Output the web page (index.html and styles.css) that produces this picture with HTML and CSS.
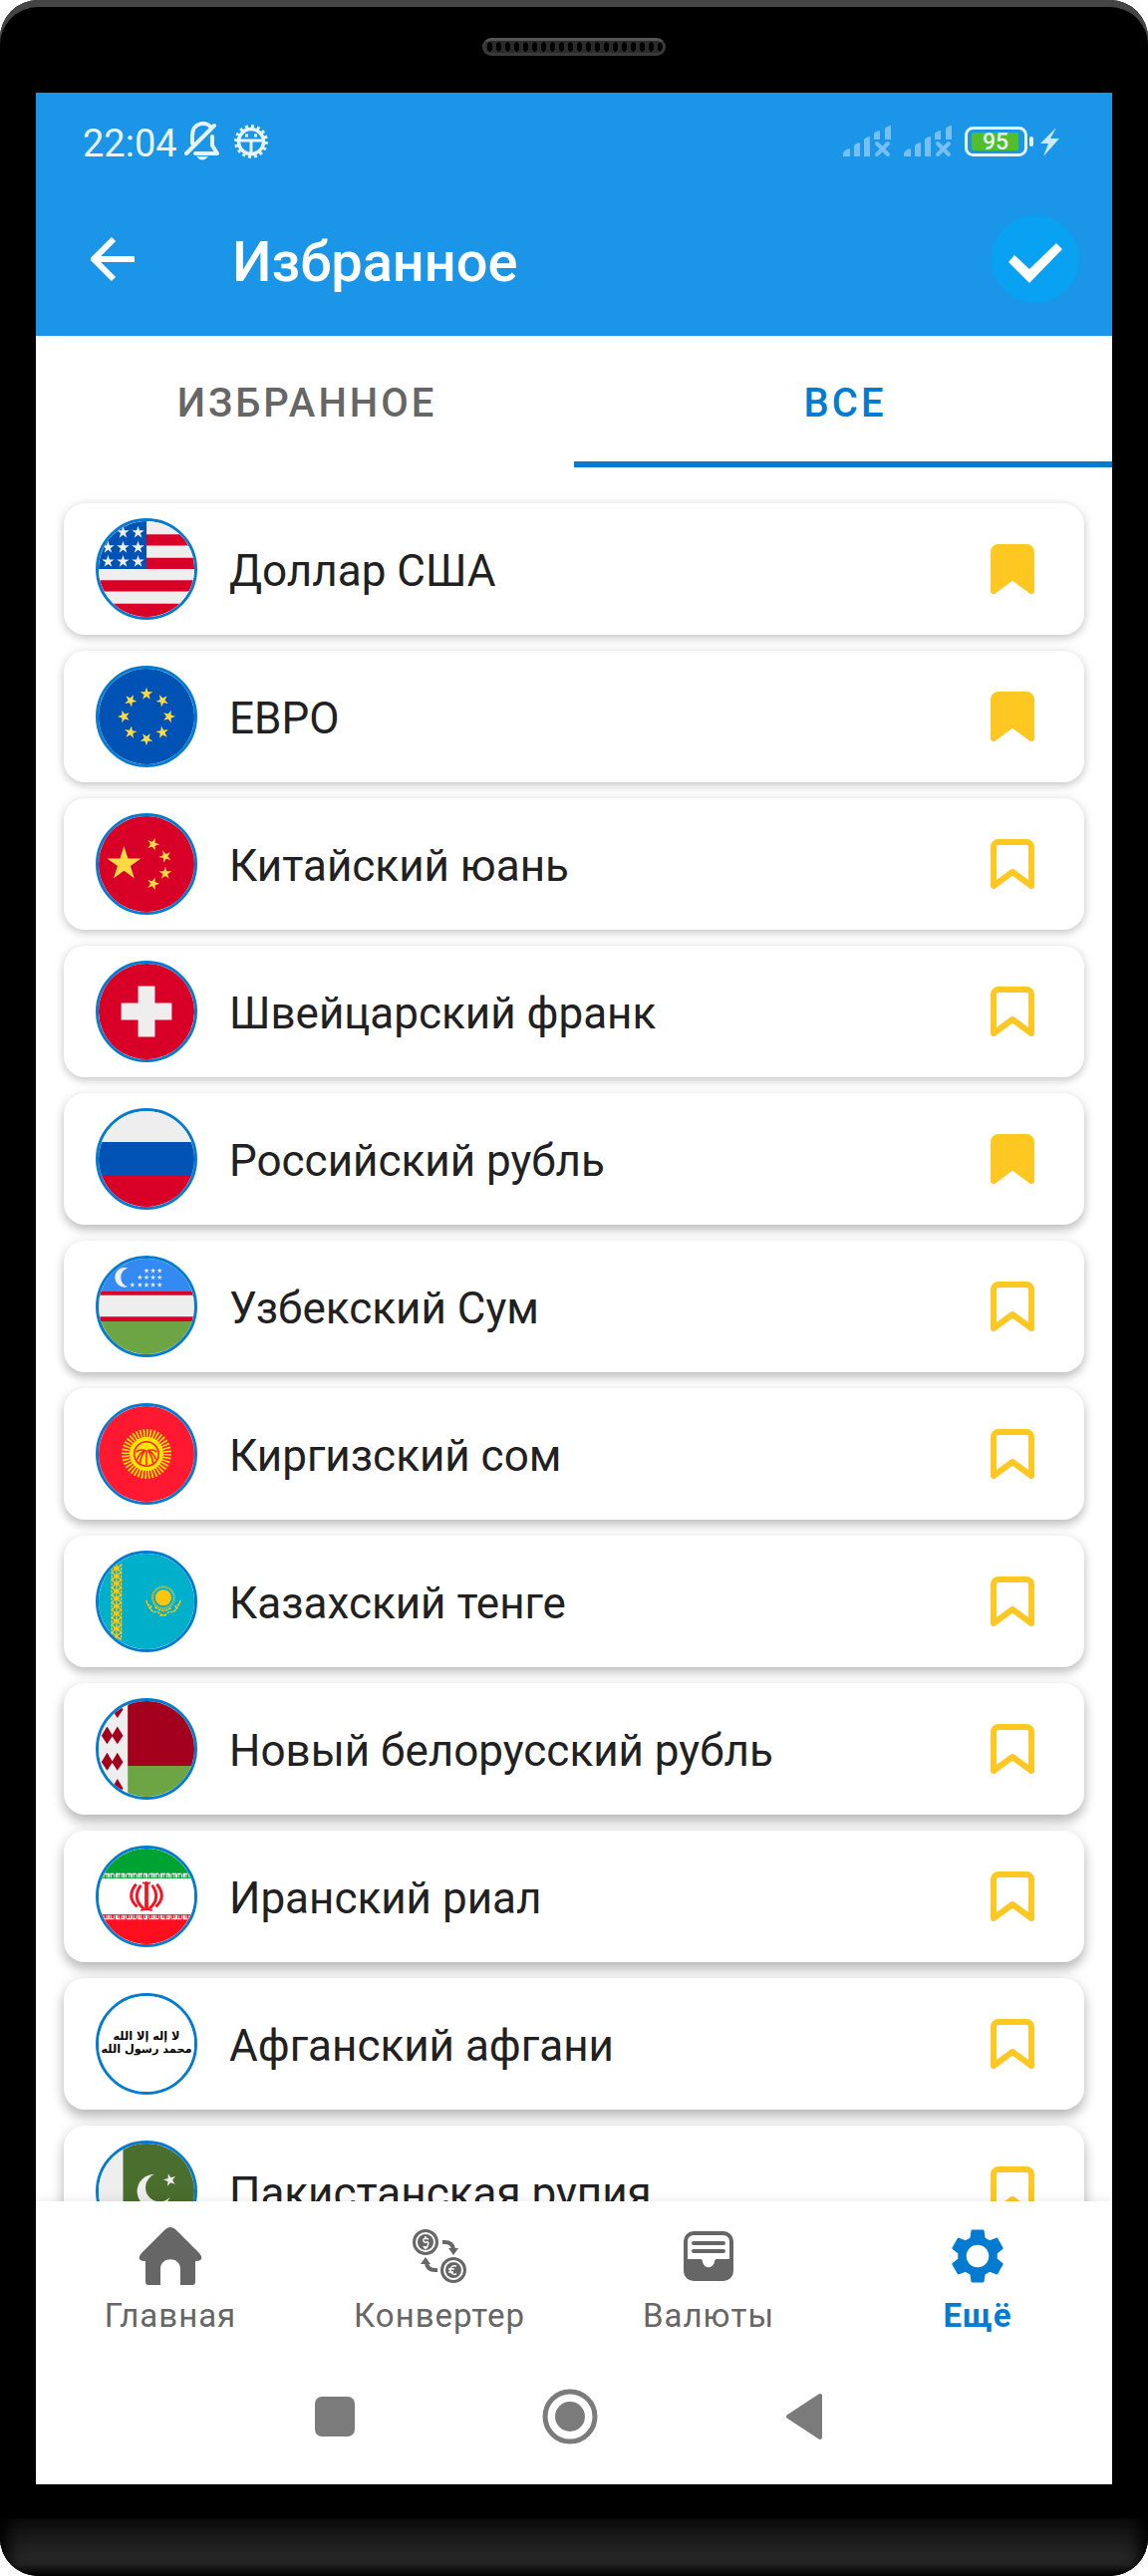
FILE: index.html
```html
<!DOCTYPE html>
<html lang="ru">
<head>
<meta charset="utf-8">
<meta name="viewport" content="width=device-width, initial-scale=1">
<title>Избранное</title>
<link rel="stylesheet" href="styles.css">
</head>
<body>
<svg class="defs" aria-hidden="true">
  <symbol id="star" viewBox="-10 -10 20 20" overflow="visible"><path d="M0-10 2.25-3.1H9.5L3.63 1.18 5.88 8.1 0 3.82-5.88 8.1-3.63 1.18-9.5-3.1H-2.25z"/></symbol>
  <symbol id="mark" viewBox="0 0 66 66"><path d="M19 11h28a5 5 0 0 1 5 5v39L33 41 14 55V16a5 5 0 0 1 5-5z" stroke="#ffc721" stroke-width="6" stroke-linejoin="round"/></symbol>
  <symbol id="signal" viewBox="0 0 48 32"><path d="M0 31v-3q1-4 7-5v8zM11 31V20q1-2 6-3v14zM21 31V14q1-2 6-3v20zM31 14V8q1-2 6-3v9zM42 14V3q1-2 6-3v14z"/><path d="m34 18 11 11m0-11L34 29" stroke="currentColor" stroke-width="4" stroke-linecap="round"/></symbol>
</svg>
<div class="phone">
  <div class="bezel"><span class="speaker"></span></div>
  <div class="screen">
    <header class="top">
      <div class="status">
        <span class="time">22:04</span>
        <svg class="bell" width="36" height="40" viewBox="0 0 36 40" fill="none" stroke="#e8f4fd" stroke-width="4" stroke-linecap="round" stroke-linejoin="round"><path d="M2 32 30 4M8 22V14C8 0 23 0 26 5M11 32H33L28 24V15"/><path d="M12 35h12q-6 7-12 0z" fill="#e8f4fd" stroke="none"/></svg>
        <svg class="bug" width="34" height="34" viewBox="0 0 34 34" fill="none" stroke="#e8f4fd"><circle cx="17" cy="17" r="12.5" stroke-width="3.5"/><circle cx="17" cy="17" r="15.2" stroke-width="3.4" pathLength="32" stroke-dasharray="1 1"/><path d="M4 16h26M17 17v13" stroke-width="3"/><path d="M11 11h3M20 11h3" stroke-width="3"/></svg>
        <div class="indicators">
          <svg class="signal" width="48" height="32"><use href="#signal"/></svg>
          <svg class="signal" width="48" height="32"><use href="#signal"/></svg>
          <svg class="battery" width="96" height="30" viewBox="0 0 96 30"><rect x="1.5" y="1.5" width="60" height="27" rx="7" fill="none" stroke="#e8f4fd" stroke-width="3"/><rect x="7" y="6" width="47" height="18" rx="2" fill="#50bf2a"/><text x="31" y="23" text-anchor="middle" class="charge">95</text><rect x="65" y="10" width="4" height="10" rx="2" fill="#e8f4fd"/><path d="M92 1 76 17h8l-5 13 16-18h-9z" fill="#cfe8fb"/></svg>
        </div>
      </div>
      <div class="appbar">
        <button class="icon-button back" aria-label="Назад"><svg width="44" height="44" viewBox="0 0 44 44" fill="none" stroke="#fff" stroke-width="6"><path d="M44 22H4M23 2 3 22l20 20"/></svg></button>
        <h1>Избранное</h1>
        <button class="icon-button done" aria-label="Готово"><svg width="88" height="88" viewBox="0 0 88 88" fill="#fff"><path d="m17 47 6-7 15 14 27-26 6 6-33 34z"/></svg></button>
      </div>
    </header>
    <div class="tabs" role="tablist">
      <button class="tab" role="tab" aria-selected="false">ИЗБРАННОЕ</button>
      <button class="tab active" role="tab" aria-selected="true">ВСЕ</button>
    </div>
    <ul class="list">
      <li class="card">
        <svg class="flag" viewBox="0 0 102 102"><path fill="#eee" d="M0 0h102v102H0z"/><path fill="#d80027" d="M51 14h51v12H51zM51 39h51v12H51zM0 63h102v12H0zM0 88h102v14H0z"/><path fill="#0052b4" d="M0 0h51v51H0z"/><g fill="#eee"><use href="#star" x="19" y="5" width="14" height="14"/><use href="#star" x="35" y="5" width="14" height="14"/><use href="#star" x="3" y="21" width="14" height="14"/><use href="#star" x="19" y="21" width="14" height="14"/><use href="#star" x="35" y="21" width="14" height="14"/><use href="#star" x="3" y="36" width="14" height="14"/><use href="#star" x="19" y="36" width="14" height="14"/><use href="#star" x="35" y="36" width="14" height="14"/></g></svg>
        <span class="name">Доллар США</span>
        <button class="icon-button mark saved" aria-pressed="true" aria-label="Доллар США в избранном"><svg width="66" height="66"><use href="#mark"/></svg></button>
      </li>
      <li class="card">
        <svg class="flag" viewBox="0 0 102 102"><path fill="#0052b4" d="M0 0h102v102H0z"/><g fill="#ffda44"><use href="#star" x="44" y="20" width="14" height="14"/><use href="#star" x="44" y="20" width="14" height="14" transform="rotate(45 51 51)"/><use href="#star" x="44" y="20" width="14" height="14" transform="rotate(90 51 51)"/><use href="#star" x="44" y="20" width="14" height="14" transform="rotate(135 51 51)"/><use href="#star" x="44" y="20" width="14" height="14" transform="rotate(180 51 51)"/><use href="#star" x="44" y="20" width="14" height="14" transform="rotate(225 51 51)"/><use href="#star" x="44" y="20" width="14" height="14" transform="rotate(270 51 51)"/><use href="#star" x="44" y="20" width="14" height="14" transform="rotate(315 51 51)"/></g></svg>
        <span class="name">ЕВРО</span>
        <button class="icon-button mark saved" aria-pressed="true" aria-label="ЕВРО в избранном"><svg width="66" height="66"><use href="#mark"/></svg></button>
      </li>
      <li class="card">
        <svg class="flag" viewBox="0 0 102 102"><path fill="#d80027" d="M0 0h102v102H0z"/><g fill="#ffda44"><use href="#star" x="8" y="32" width="38" height="38"/><use href="#star" x="51" y="23" width="14" height="14" transform="rotate(18 58 30)"/><use href="#star" x="64" y="36" width="14" height="14" transform="rotate(-22 71 43)"/><use href="#star" x="64" y="54" width="14" height="14"/><use href="#star" x="51" y="65" width="14" height="14" transform="rotate(18 58 72)"/></g></svg>
        <span class="name">Китайский юань</span>
        <button class="icon-button mark" aria-pressed="false" aria-label="Добавить: Китайский юань"><svg width="66" height="66"><use href="#mark"/></svg></button>
      </li>
      <li class="card">
        <svg class="flag" viewBox="0 0 102 102"><path fill="#d80027" d="M0 0h102v102H0z"/><path fill="#eee" d="M42 24h18v18h18v18H60v18H42V60H24V42h18z"/></svg>
        <span class="name">Швейцарский франк</span>
        <button class="icon-button mark" aria-pressed="false" aria-label="Добавить: Швейцарский франк"><svg width="66" height="66"><use href="#mark"/></svg></button>
      </li>
      <li class="card">
        <svg class="flag" viewBox="0 0 102 102"><path fill="#eee" d="M0 0h102v33H0z"/><path fill="#0052b4" d="M0 33h102v36H0z"/><path fill="#d80027" d="M0 69h102v33H0z"/></svg>
        <span class="name">Российский рубль</span>
        <button class="icon-button mark saved" aria-pressed="true" aria-label="Российский рубль в избранном"><svg width="66" height="66"><use href="#mark"/></svg></button>
      </li>
      <li class="card">
        <svg class="flag" viewBox="0 0 102 102"><path fill="#338af3" d="M0 0h102v35H0z"/><path fill="#d80027" d="M0 35h102v32H0z"/><path fill="#eee" d="M0 39h102v23H0z"/><path fill="#6da544" d="M0 67h102v35H0z"/><g fill="#eee"><path d="M31 10A10.500 10.500 0 1 0 31 30A10.500 10.500 0 0 1 31 10z"/><use href="#star" x="48" y="10" width="6" height="6"/><use href="#star" x="55" y="10" width="6" height="6"/><use href="#star" x="62" y="10" width="6" height="6"/><use href="#star" x="41" y="17" width="6" height="6"/><use href="#star" x="48" y="17" width="6" height="6"/><use href="#star" x="55" y="17" width="6" height="6"/><use href="#star" x="62" y="17" width="6" height="6"/><use href="#star" x="33" y="25" width="6" height="6"/><use href="#star" x="41" y="25" width="6" height="6"/><use href="#star" x="48" y="25" width="6" height="6"/><use href="#star" x="55" y="25" width="6" height="6"/><use href="#star" x="62" y="25" width="6" height="6"/></g></svg>
        <span class="name">Узбекский Сум</span>
        <button class="icon-button mark" aria-pressed="false" aria-label="Добавить: Узбекский Сум"><svg width="66" height="66"><use href="#mark"/></svg></button>
      </li>
      <li class="card">
        <svg class="flag" viewBox="0 0 102 102"><path fill="#ff1930" d="M0 0h102v102H0z"/><circle cx="51" cy="51" r="18" fill="#ffe600"/><circle cx="51" cy="51" r="22" fill="none" stroke="#ffe600" stroke-width="9" pathLength="80" stroke-dasharray="1 1"/><g fill="none" stroke="#ff1930" stroke-width="1.600"><circle cx="51" cy="51" r="13"/><path d="M51 48v15M49 48q-4 5-5 13M53 48q4 5 5 13M50 47q-7 3-9 10M52 47q7 3 9 10M51 48q-7-3-11 1M51 48q7-3 11 1"/></g></svg>
        <span class="name">Киргизский сом</span>
        <button class="icon-button mark" aria-pressed="false" aria-label="Добавить: Киргизский сом"><svg width="66" height="66"><use href="#mark"/></svg></button>
      </li>
      <li class="card">
        <svg class="flag" viewBox="0 0 102 102"><path fill="#00afca" d="M0 0h102v102H0z"/><g fill="none" stroke="#fec50c" stroke-width="1.500"><path d="M14 11v80M24 11v80" stroke-dasharray="3 1"/><path d="M14 12l10 8-10 8 10 8-10 8 10 8-10 8 10 8-10 8 10 8-10 8M24 12l-10 8 10 8-10 8 10 8-10 8 10 8-10 8 10 8-10 8 10 8M19 11v80"/><path d="M16 16h6M16 32h6M16 48h6M16 64h6M16 80h6M16 24h6M16 40h6M16 56h6M16 72h6" stroke-width="2.500"/><circle cx="69" cy="47" r="11.500" stroke-width="2.500" pathLength="64" stroke-dasharray="1 1"/><path d="M51 50q0 5 5 6-2 5 4 6M87 50q0 5-5 6 2 5-4 6M52 53q4 11 10 9M86 53q-4 11-10 9M60 57q9 8 18 0M63 62q6 7 12 0M65 66h8" stroke-dasharray="3 1"/></g><circle cx="69" cy="47" r="8.500" fill="#fec50c"/></svg>
        <span class="name">Казахский тенге</span>
        <button class="icon-button mark" aria-pressed="false" aria-label="Добавить: Казахский тенге"><svg width="66" height="66"><use href="#mark"/></svg></button>
      </li>
      <li class="card">
        <svg class="flag" viewBox="0 0 102 102"><path fill="#eee" d="M0 0h31v102H0z"/><path fill="#a2001d" d="M31 0h71v69H31z"/><path fill="#6da544" d="M31 69h71v33H31z"/><path fill="#a2001d" d="m9 27 6 10-6 9-6-9zM20 27l6 10-6 9-6-9zM9 55l6 10-6 9-6-9zM20 55l6 10-6 9-6-9zM20-1l6 10-6 9-6-9zM20 83l6 10-6 9-6-9z"/></svg>
        <span class="name">Новый белорусский рубль</span>
        <button class="icon-button mark" aria-pressed="false" aria-label="Добавить: Новый белорусский рубль"><svg width="66" height="66"><use href="#mark"/></svg></button>
      </li>
      <li class="card">
        <svg class="flag" viewBox="0 0 102 102"><path fill="#fff" d="M0 0h102v102H0z"/><path fill="#00a331" d="M0 0h102v32H0z"/><path fill="#ff0f1e" d="M0 70h102v32H0z"/><g fill="none" stroke="#fff"><path d="M0 27h102M0 75h102" stroke-width="1.500" stroke-dasharray="4 2 5 1"/><path d="M0 29h102M0 73h102" stroke-width="4" stroke-dasharray="1 1 2 1 1 2"/></g><g fill="none" stroke="#ff0f1e" stroke-width="3"><path d="M51 37v29" stroke-width="4"/><path d="M47 36q2 2 4 0 2 2 4 0M45 66q6-3 12 0" stroke-width="2"/><path d="M45 39q-10 14 3 25M57 39q10 14-3 25"/><path d="M40 38q-11 13 1 24M62 38q11 13-1 24"/></g></svg>
        <span class="name">Иранский риал</span>
        <button class="icon-button mark" aria-pressed="false" aria-label="Добавить: Иранский риал"><svg width="66" height="66"><use href="#mark"/></svg></button>
      </li>
      <li class="card">
        <svg class="flag" viewBox="0 0 102 102"><path fill="#fff" d="M0 0h102v102H0z"/><text class="script" x="51" y="47" text-anchor="middle">لا إله إلا الله</text><text class="script" x="51" y="61" text-anchor="middle">محمد رسول الله</text></svg>
        <span class="name">Афганский афгани</span>
        <button class="icon-button mark" aria-pressed="false" aria-label="Добавить: Афганский афгани"><svg width="66" height="66"><use href="#mark"/></svg></button>
      </li>
      <li class="card">
        <svg class="flag" viewBox="0 0 102 102"><path fill="#eee" d="M0 0h26v102H0z"/><path fill="#496e2d" d="M26 0h76v102H26z"/><circle cx="59" cy="51" r="18" fill="#eee"/><circle cx="65" cy="47" r="15" fill="#496e2d"/><use href="#star" x="69" y="32" width="14" height="14" fill="#eee" transform="rotate(-15 76 39)"/></svg>
        <span class="name">Пакистанская рупия</span>
        <button class="icon-button mark" aria-pressed="false" aria-label="Добавить: Пакистанская рупия"><svg width="66" height="66"><use href="#mark"/></svg></button>
      </li>
    </ul>
    <nav class="bottom-nav">
      <a href="#home"><svg width="66" height="66" viewBox="0 0 66 66" fill="currentColor"><path d="M28 6q5-4 10 0l24 24q4 5 1 7-1 1-5 1v21q0 3-3 3H43V46c0-13-20-13-20 0v16H11q-3 0-3-3V38q-4 0-5-1-3-2 1-7z"/></svg>Главная</a>
      <a href="#converter"><svg width="66" height="66" viewBox="0 0 66 66" fill="none" stroke="currentColor"><circle cx="19" cy="19" r="11.500" stroke-width="3"/><circle cx="19" cy="19" r="8" fill="currentColor" stroke="none"/><circle cx="47" cy="47" r="11.500" stroke-width="3"/><circle cx="47" cy="47" r="8" fill="currentColor" stroke="none"/><path d="M36 19q10-1 11 7M31 47q-10 1-11-7" stroke-width="4"/><path d="M42 25h10l-5 7zM14 41h10l-5-7z" fill="currentColor" stroke="none"/><path d="M22 16q-5-2-5 1t3 2 1 4-4 0M19 13v2M19 23v2M50 43q-6-1-6 4t6 4M42 46h6M42 49h5" stroke="#fff" stroke-width="1.500"/></svg>Конвертер</a>
      <a href="#currencies"><svg width="66" height="66" viewBox="0 0 66 66"><rect x="10" y="10" width="46" height="46" rx="8" fill="none" stroke="currentColor" stroke-width="4"/><path d="M10 36h15q2 0 2 3c2 7 10 7 12 0q0-3 2-3h15v14q0 6-6 6H16q-6 0-6-6z" fill="currentColor"/><path d="M18 20h30M18 28h30" stroke="currentColor" stroke-width="4" stroke-linecap="round"/></svg>Валюты</a>
      <a href="#more" class="current" aria-current="page"><svg width="66" height="66" viewBox="0 0 24 24" fill="currentColor"><path d="M19.140 12.940c.04-.3.06-.61.06-.94 0-.32-.02-.64-.07-.94l2.030-1.580c.18-.14.23-.41.12-.61l-1.920-3.320c-.12-.22-.37-.29-.59-.22l-2.390.96c-.5-.38-1.030-.7-1.620-.94l-.36-2.540c-.04-.24-.24-.41-.48-.41h-3.840c-.24 0-.43.17-.47.41l-.36 2.540c-.59.24-1.130.57-1.620.94l-2.390-.96c-.22-.08-.47 0-.59.22L2.740 8.870c-.12.21-.08.47.12.61l2.030 1.580c-.05.3-.09.63-.09.94s.02.64.07.94l-2.030 1.580c-.18.14-.23.41-.12.61l1.920 3.320c.12.22.37.29.59.22l2.390-.96c.5.38 1.030.7 1.620.94l.36 2.540c.05.24.24.41.48.41h3.840c.24 0 .44-.17.47-.41l.36-2.540c.59-.24 1.130-.56 1.620-.94l2.390.96c.22.08.47 0 .59-.22l1.920-3.320c.12-.22.07-.47-.12-.61zM12 16.100a4.100 4.100 0 1 1 0-8.200 4.100 4.100 0 0 1 0 8.200z"/></svg>Ещё</a>
    </nav>
    <div class="system-nav">
      <button class="icon-button" aria-label="Недавние"><svg width="56" height="56" viewBox="0 0 56 56"><rect x="8" y="8" width="40" height="40" rx="7" fill="#7b7b7b"/></svg></button>
      <button class="icon-button" aria-label="Домой"><svg width="56" height="56" viewBox="0 0 56 56"><circle cx="28" cy="28" r="25" fill="none" stroke="#7b7b7b" stroke-width="5"/><circle cx="28" cy="28" r="15" fill="#7b7b7b"/></svg></button>
      <button class="icon-button" aria-label="Назад"><svg width="56" height="56" viewBox="0 0 56 56"><path d="M11 28 43 7v42z" fill="#7b7b7b" stroke="#7b7b7b" stroke-width="4" stroke-linejoin="round"/></svg></button>
    </div>
  </div>
  <div class="chin"></div>
</div>
</body>
</html>
```
FILE: styles.css
```css
* {
  box-sizing: border-box;
}

body {
  margin: 0;
  background: #fff;
  color: #212121;
  font-family: Roboto, "Liberation Sans", sans-serif;
}

.defs {
  display: none;
}

.phone {
  display: flex;
  flex-direction: column;
  height: 100vh;
  overflow: hidden;
  border-radius: 38px;
  background: #000;
  box-shadow: inset 0 7px 0 #454545;
}

.bezel {
  display: flex;
  flex: none;
  justify-content: center;
  height: 93px;
  padding-top: 38px;
}

.speaker {
  width: 184px;
  height: 18px;
  border: 3px solid #3a3a3a;
  border-top-color: #555;
  border-radius: 9px;
  background: radial-gradient(ellipse 3px 5px, #000 90%, #2b2b2b) 0 0 / 9px 12px;
}

.screen {
  display: flex;
  flex: 1;
  flex-direction: column;
  min-height: 0;
  margin: 0 36px;
  background: #fff;
}

.top {
  flex: none;
  background: #1a95e8;
}

.status {
  display: flex;
  align-items: center;
  height: 90px;
  padding: 8px 52px 0 47px;
}

.time {
  padding-top: 4px;
  color: #e8f4fd;
  font-size: 38px;
  line-height: 44px;
}

.bell {
  margin-left: 7px;
}

.bug {
  margin-left: 14px;
}

.indicators {
  display: flex;
  gap: 13px;
  align-items: center;
  margin-left: auto;
}

.signal {
  color: #75bff1;
  fill: currentColor;
}

.charge {
  fill: #e8f4fd;
  font-size: 23px;
  font-weight: 500;
}

.icon-button {
  display: grid;
  flex: none;
  place-items: center;
  padding: 0;
  border: 0;
  background: none;
  cursor: pointer;
}

.appbar {
  display: flex;
  align-items: center;
  height: 154px;
  padding: 0 33px 0 55px;
}

.appbar h1 {
  flex: 1;
  margin: 0 0 0 98px;
  padding-top: 5px;
  color: #fff;
  font-size: 56px;
  font-weight: 500;
  line-height: 64px;
}

.done {
  border-radius: 50%;
  background: #09a1f2;
}

.tabs {
  display: grid;
  flex: none;
  grid-template-columns: 1fr 1fr;
}

.tab {
  height: 132px;
  padding: 9px 0 0 4px;
  border: 0;
  border-bottom: 6px solid transparent;
  background: none;
  color: #666;
  font-family: inherit;
  font-size: 40px;
  font-weight: 500;
  letter-spacing: 3px;
}

.tab.active {
  border-bottom-color: #037bd0;
  color: #037bd0;
}

.list {
  display: flex;
  flex: 1;
  flex-direction: column;
  gap: 16px;
  min-height: 0;
  margin: 0;
  padding: 36px 28px 16px;
  overflow: hidden;
  list-style: none;
}

.card {
  display: flex;
  flex: none;
  gap: 32px;
  align-items: center;
  height: 132px;
  padding: 0 39px 0 32px;
  border-radius: 21px;
  background: #fff;
  box-shadow: 0 3px 8px rgb(0 0 0 / 20%), 0 0 16px rgb(0 0 0 / 5%);
}

.card:nth-child(n+5) {
  box-shadow: 0 5px 10px rgb(0 0 0 / 23%), 0 0 16px rgb(0 0 0 / 6%);
}

.card:nth-child(n+9) {
  box-shadow: 0 7px 12px rgb(0 0 0 / 25%), 0 0 16px rgb(0 0 0 / 7%);
}

.flag {
  flex: none;
  width: 102px;
  height: 102px;
  border: 3px solid #037bd0;
  border-radius: 50%;
}

.script {
  fill: #000;
  font-family: "DejaVu Sans", sans-serif;
  font-size: 12px;
  font-weight: 700;
}

.name {
  flex: 1;
  padding-top: 4px;
  font-size: 44px;
  line-height: 52px;
  white-space: nowrap;
}

.mark {
  fill: none;
}

.mark.saved {
  fill: #ffc721;
}

.bottom-nav {
  z-index: 1;
  display: grid;
  flex: none;
  grid-template-columns: repeat(4, 1fr);
  height: 151px;
  background: #fff;
  box-shadow: 0 0 12px rgb(0 0 0 / 10%);
}

.bottom-nav a {
  display: flex;
  flex-direction: column;
  gap: 7px;
  align-items: center;
  padding-top: 22px;
  color: #666;
  font-size: 33px;
  letter-spacing: 1px;
  line-height: 40px;
  text-decoration: none;
}

.bottom-nav .current {
  color: #037bd0;
  font-weight: 700;
}

.system-nav {
  z-index: 1;
  display: flex;
  flex: none;
  gap: 180px;
  align-items: center;
  justify-content: center;
  height: 133px;
  padding: 0 8px 4px 0;
  background: #fff;
}

.chin {
  flex: none;
  height: 58px;
  margin-top: 34px;
  background: linear-gradient(#0b0b0b, #262626 65%, #222 80%, #000);
  box-shadow: inset 16px 0 16px -8px #000, inset -16px 0 16px -8px #000;
}
```
